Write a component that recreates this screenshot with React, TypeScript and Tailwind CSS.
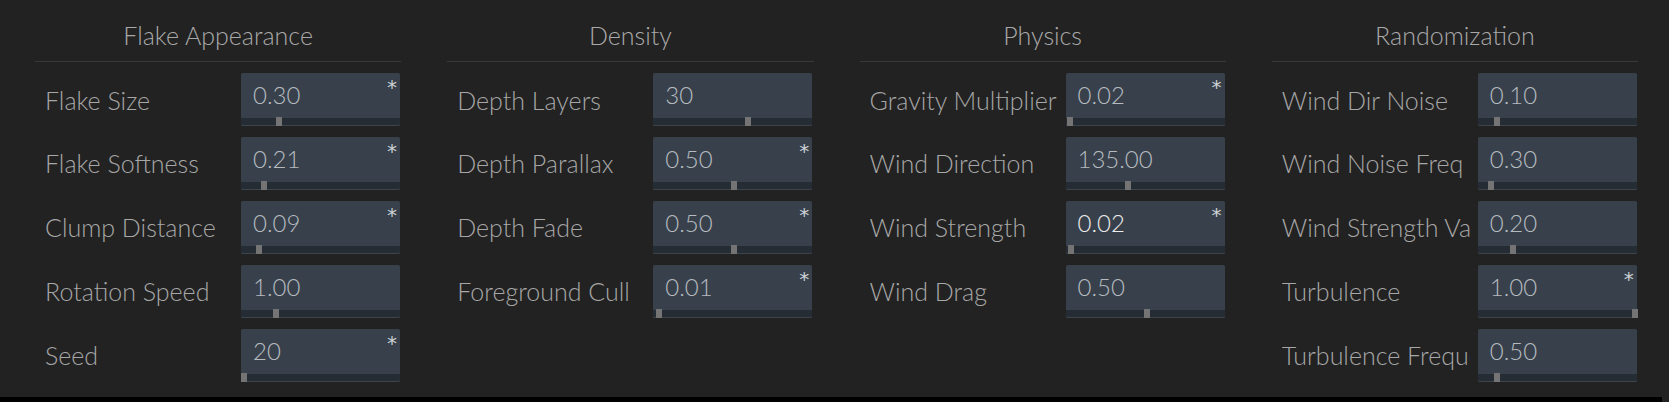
import React from "react";

type Field = { label: string; value: string; star?: boolean; thumb: number; bright?: boolean };
type Section = { title: string; fields: Field[] };

const sections: Section[] = [
  {
    title: "Flake Appearance",
    fields: [
      { label: "Flake Size", value: "0.30", star: true, thumb: 35 },
      { label: "Flake Softness", value: "0.21", star: true, thumb: 20 },
      { label: "Clump Distance", value: "0.09", star: true, thumb: 15 },
      { label: "Rotation Speed", value: "1.00", thumb: 32 },
      { label: "Seed", value: "20", star: true, thumb: 0 },
    ],
  },
  {
    title: "Density",
    fields: [
      { label: "Depth Layers", value: "30", thumb: 92 },
      { label: "Depth Parallax", value: "0.50", star: true, thumb: 78 },
      { label: "Depth Fade", value: "0.50", star: true, thumb: 78 },
      { label: "Foreground Cull", value: "0.01", star: true, thumb: 3 },
    ],
  },
  {
    title: "Physics",
    fields: [
      { label: "Gravity Multiplier", value: "0.02", star: true, thumb: 1 },
      { label: "Wind Direction", value: "135.00", thumb: 59 },
      { label: "Wind Strength", value: "0.02", star: true, thumb: 2, bright: true },
      { label: "Wind Drag", value: "0.50", thumb: 78 },
    ],
  },
  {
    title: "Randomization",
    fields: [
      { label: "Wind Dir Noise", value: "0.10", thumb: 16 },
      { label: "Wind Noise Freq", value: "0.30", thumb: 10 },
      { label: "Wind Strength Variation", value: "0.20", thumb: 32 },
      { label: "Turbulence", value: "1.00", star: true, thumb: 154 },
      { label: "Turbulence Frequency", value: "0.50", thumb: 16 },
    ],
  },
];

function Row({ f }: { f: Field }) {
  return (
    <div className="flex items-center h-[53px]">
      <div className="w-[188px] ml-[10px] mr-[8px] overflow-hidden whitespace-nowrap text-[25px] leading-[32px] text-[#a7a7a7] font-light">
        {f.label}
      </div>
      <div className="relative w-[159px] h-[53px] rounded-[2px] bg-[#38414b] shrink-0">
        <div
          className={
            "absolute left-[12px] top-[9px] text-[24px] leading-[26px] font-light " +
            (f.bright ? "text-[#ececec]" : "text-[#b6bbc0]")
          }
        >
          {f.value}
        </div>
        {f.star && (
          <div
            className="absolute right-[3px] top-[4px] text-[20px] leading-[20px] text-[#cdd1d5]"
            style={{ fontFamily: "'DejaVu Sans', sans-serif" }}
          >
            *
          </div>
        )}
        <div className="absolute left-0 right-0 bottom-0 h-[8px] bg-[#262c34] border-b border-[#3c444e] rounded-b-[2px]" />
        <div className="absolute bottom-0 h-[9px] w-[6px] bg-[#747474]" style={{ left: `${f.thumb}px` }} />
      </div>
    </div>
  );
}

export default function App() {
  return (
    <div
      className="w-[1669px] h-[402px] bg-[#222222] flex flex-col overflow-hidden"
      style={{ fontFamily: "Lato, 'Noto Sans', sans-serif" }}
    >
      <div className="flex-1 flex pl-[35px] pr-[31px] gap-[46px]">
        {sections.map((s) => (
          <div key={s.title} className="flex-1 flex flex-col">
            <div className="pt-[20px] pb-[10px] border-b border-[#393939] text-center text-[25px] leading-[31px] text-[#a9a9a9] font-light">
              {s.title}
            </div>
            <div className="flex flex-col gap-[10.9px] pt-[11px]">
              {s.fields.map((f) => (
                <Row key={f.label} f={f} />
              ))}
            </div>
          </div>
        ))}
      </div>
      <div className="h-[5px] flex">
        <div className="w-[1662px] bg-black" />
      </div>
    </div>
  );
}
